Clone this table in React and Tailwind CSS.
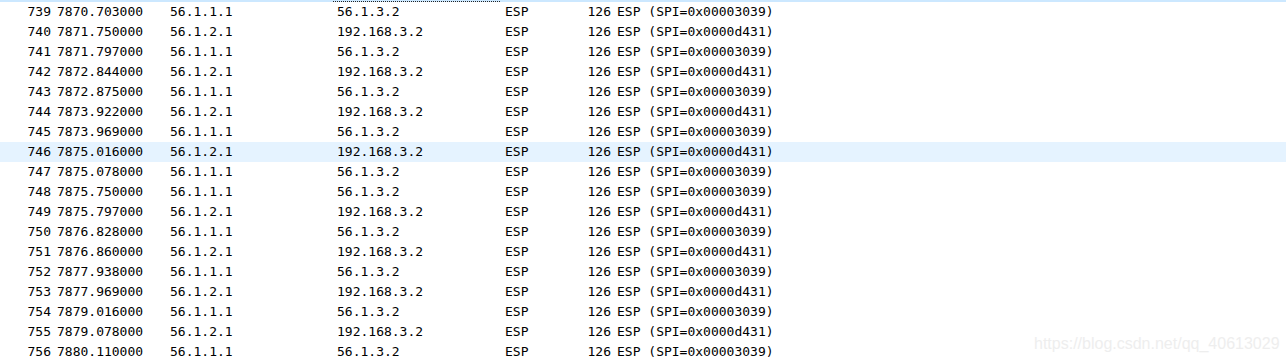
import React from 'react';

const rows = [
  [739, '7870.703000', 'a'],
  [740, '7871.750000', 'b'],
  [741, '7871.797000', 'a'],
  [742, '7872.844000', 'b'],
  [743, '7872.875000', 'a'],
  [744, '7873.922000', 'b'],
  [745, '7873.969000', 'a'],
  [746, '7875.016000', 'b'],
  [747, '7875.078000', 'a'],
  [748, '7875.750000', 'a'],
  [749, '7875.797000', 'b'],
  [750, '7876.828000', 'a'],
  [751, '7876.860000', 'b'],
  [752, '7877.938000', 'a'],
  [753, '7877.969000', 'b'],
  [754, '7879.016000', 'a'],
  [755, '7879.078000', 'b'],
  [756, '7880.110000', 'a'],
];

const flows = {
  a: { src: '56.1.1.1', dst: '56.1.3.2', spi: '0x00003039' },
  b: { src: '56.1.2.1', dst: '192.168.3.2', spi: '0x0000d431' },
};

const App = () => {
  return (
    <div className="relative w-[1286px] h-[363px] bg-white overflow-hidden text-black font-['DejaVu_Sans_Mono',monospace] text-[13px]">
      {/* tail of the selected row above */}
      <div className="h-[2px] bg-[#cce8ff] flex">
        <div className="ml-[333px] w-[167px] h-[2px] border-b border-dotted border-[#222]" />
      </div>

      {/* packet rows */}
      {rows.map(([no, time, key]) => {
        const f = flows[key];
        return (
          <div
            key={no}
            className={`flex h-[20px] leading-[20px] whitespace-pre ${no === 746 ? 'bg-[#e5f3ff]' : ''}`}
          >
            <div className="w-[51px] text-right">{no}</div>
            <div className="w-[119px] pl-[6px]">{time}</div>
            <div className="w-[167px]">{f.src}</div>
            <div className="w-[168px]">{f.dst}</div>
            <div className="w-[80px]">ESP</div>
            <div className="w-[26px] text-right">126</div>
            <div className="pl-[6px]">ESP (SPI={f.spi})</div>
          </div>
        );
      })}

      {/* watermark */}
      <div className="absolute left-[1034px] top-[335px] whitespace-nowrap font-['Liberation_Sans',Arial,sans-serif] text-[16px] leading-[18px] text-[#eeeeee]">
        https://blog.csdn.net/qq_40613029
      </div>
    </div>
  );
};

export default App;
